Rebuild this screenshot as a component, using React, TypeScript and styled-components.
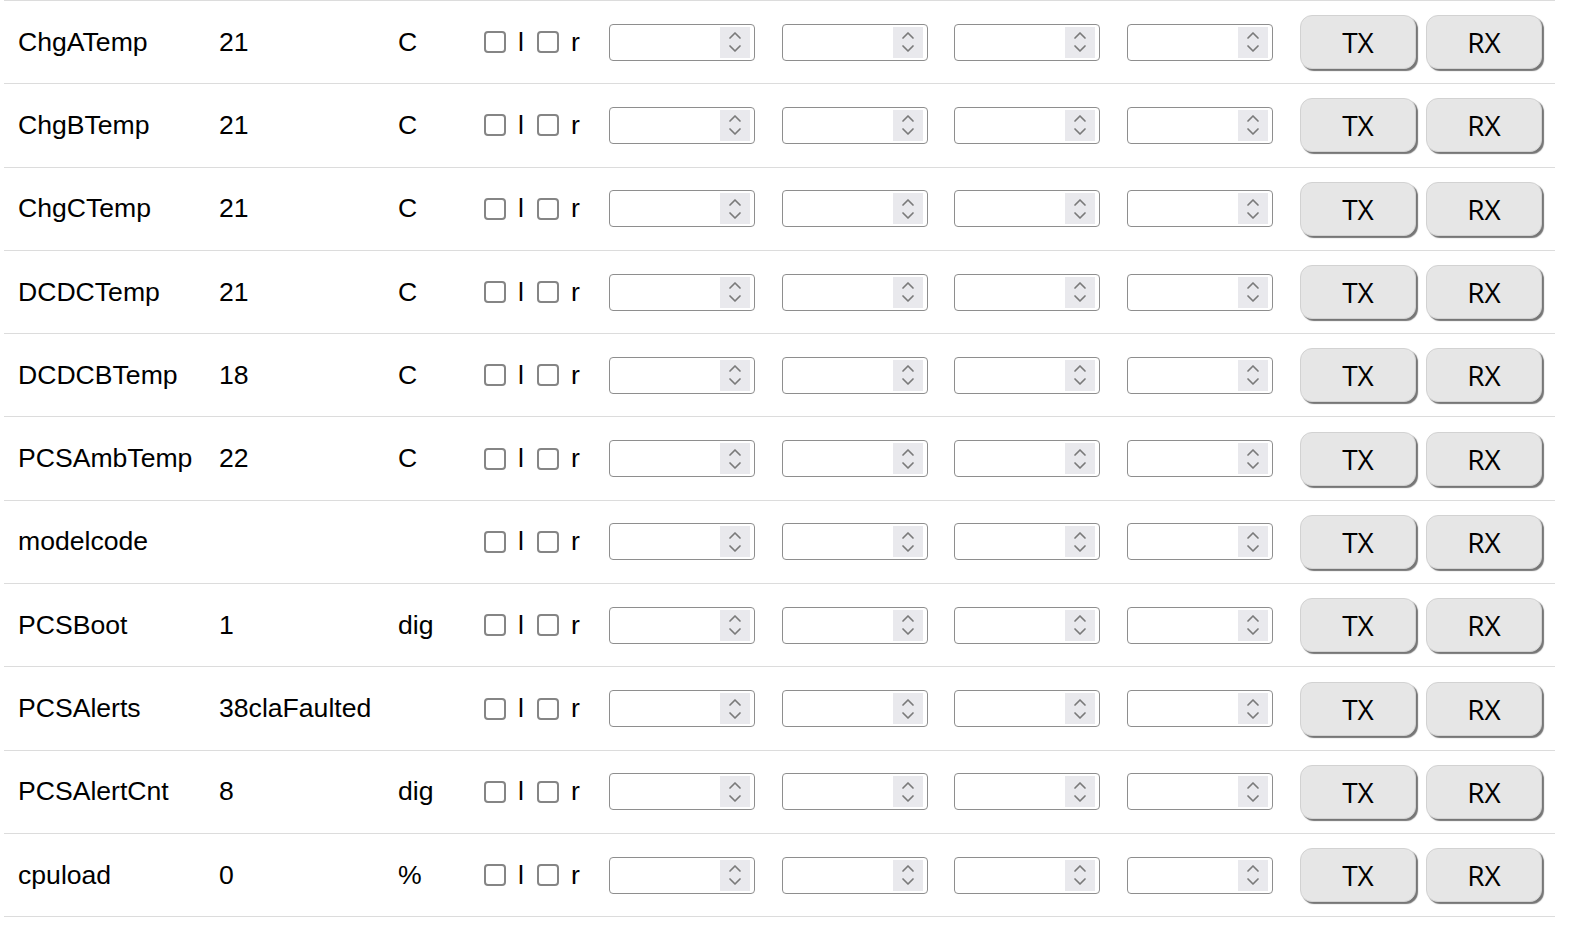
import React from 'react'
import styled, { createGlobalStyle } from 'styled-components'

type Item = { name: string; value: string; unit: string }

const items: Item[] = [
  { name: 'ChgATemp', value: '21', unit: 'C' },
  { name: 'ChgBTemp', value: '21', unit: 'C' },
  { name: 'ChgCTemp', value: '21', unit: 'C' },
  { name: 'DCDCTemp', value: '21', unit: 'C' },
  { name: 'DCDCBTemp', value: '18', unit: 'C' },
  { name: 'PCSAmbTemp', value: '22', unit: 'C' },
  { name: 'modelcode', value: '', unit: '' },
  { name: 'PCSBoot', value: '1', unit: 'dig' },
  { name: 'PCSAlerts', value: '38claFaulted', unit: '' },
  { name: 'PCSAlertCnt', value: '8', unit: 'dig' },
  { name: 'cpuload', value: '0', unit: '%' },
]

const GlobalStyle = createGlobalStyle`
  html, body {
    margin: 0;
    padding: 0;
    background: #ffffff;
    overflow: hidden;
  }
  body {
    font-family: "Liberation Sans", Arial, sans-serif;
    color: #000;
  }
`

const Table = styled.div`
  margin-left: 4px;
  width: 1551px;
  border-top: 1px solid #dcdcdc;
`

const Row = styled.div`
  display: grid;
  grid-template-columns: 201px 179px 86px 125px 173px 172px 173px 173px 126px 143px;
  align-items: center;
  height: 82.3px;
  border-bottom: 1px solid #dcdcdc;
`

const Cell = styled.div`
  padding-left: 14px;
  font-size: 26.6px;
  white-space: nowrap;
  display: flex;
  align-items: center;
`

const Check = styled.span`
  display: inline-block;
  flex-shrink: 0;
  box-sizing: border-box;
  width: 22px;
  height: 22px;
  border: 2.5px solid #858585;
  border-radius: 4px;
  background: #fff;
  margin-right: 12px;
`

const CheckLabel = styled.span`
  margin-right: 13px;
`

const NumberBox = styled.div`
  box-sizing: border-box;
  flex-shrink: 0;
  width: 146px;
  height: 37px;
  border: 1.5px solid #8e8e8e;
  border-radius: 4px;
  display: flex;
  align-items: stretch;
  padding: 2px 4px 2px 0;
  background: #fff;
`

const NumberInput = styled.input`
  flex: 1;
  min-width: 0;
  border: none;
  outline: none;
  background: transparent;
  font-size: 20px;
  font-family: inherit;
`

const Spinner = styled.div`
  width: 30px;
  background: #e9e9ed;
  display: flex;
  align-items: center;
  justify-content: center;
`

const Button = styled.button`
  box-sizing: border-box;
  flex-shrink: 0;
  width: 116px;
  height: 54px;
  border: 1px solid #d2d2d2;
  border-radius: 12px;
  background: #e6e6e6;
  box-shadow: 2px 2px 1px #767676;
  font-family: "Open Sans", "Noto Sans", sans-serif;
  font-size: 28px;
  color: #000;
  padding: 0;
  cursor: pointer;
`

const SpinIcon = () => (
  <svg width="16" height="26" viewBox="0 0 16 26" fill="none">
    <path d="M3 9 L8 4 L13 9" stroke="#7a7a7a" strokeWidth="1.7" strokeLinecap="round" strokeLinejoin="round" />
    <path d="M3 17 L8 22 L13 17" stroke="#7a7a7a" strokeWidth="1.7" strokeLinecap="round" strokeLinejoin="round" />
  </svg>
)

const NumberField = () => (
  <NumberBox>
    <NumberInput type="text" />
    <Spinner>
      <SpinIcon />
    </Spinner>
  </NumberBox>
)

const App = () => {
  return (
    <>
      <GlobalStyle />
      <Table>
        {items.map((it) => (
          <Row key={it.name}>
            <Cell>{it.name}</Cell>
            <Cell>{it.value}</Cell>
            <Cell>{it.unit}</Cell>
            <Cell>
              <Check />
              <CheckLabel>l</CheckLabel>
              <Check />
              <span>r</span>
            </Cell>
            <Cell><NumberField /></Cell>
            <Cell><NumberField /></Cell>
            <Cell><NumberField /></Cell>
            <Cell><NumberField /></Cell>
            <Cell><Button>TX</Button></Cell>
            <Cell><Button>RX</Button></Cell>
          </Row>
        ))}
      </Table>
    </>
  )
}

export default App
